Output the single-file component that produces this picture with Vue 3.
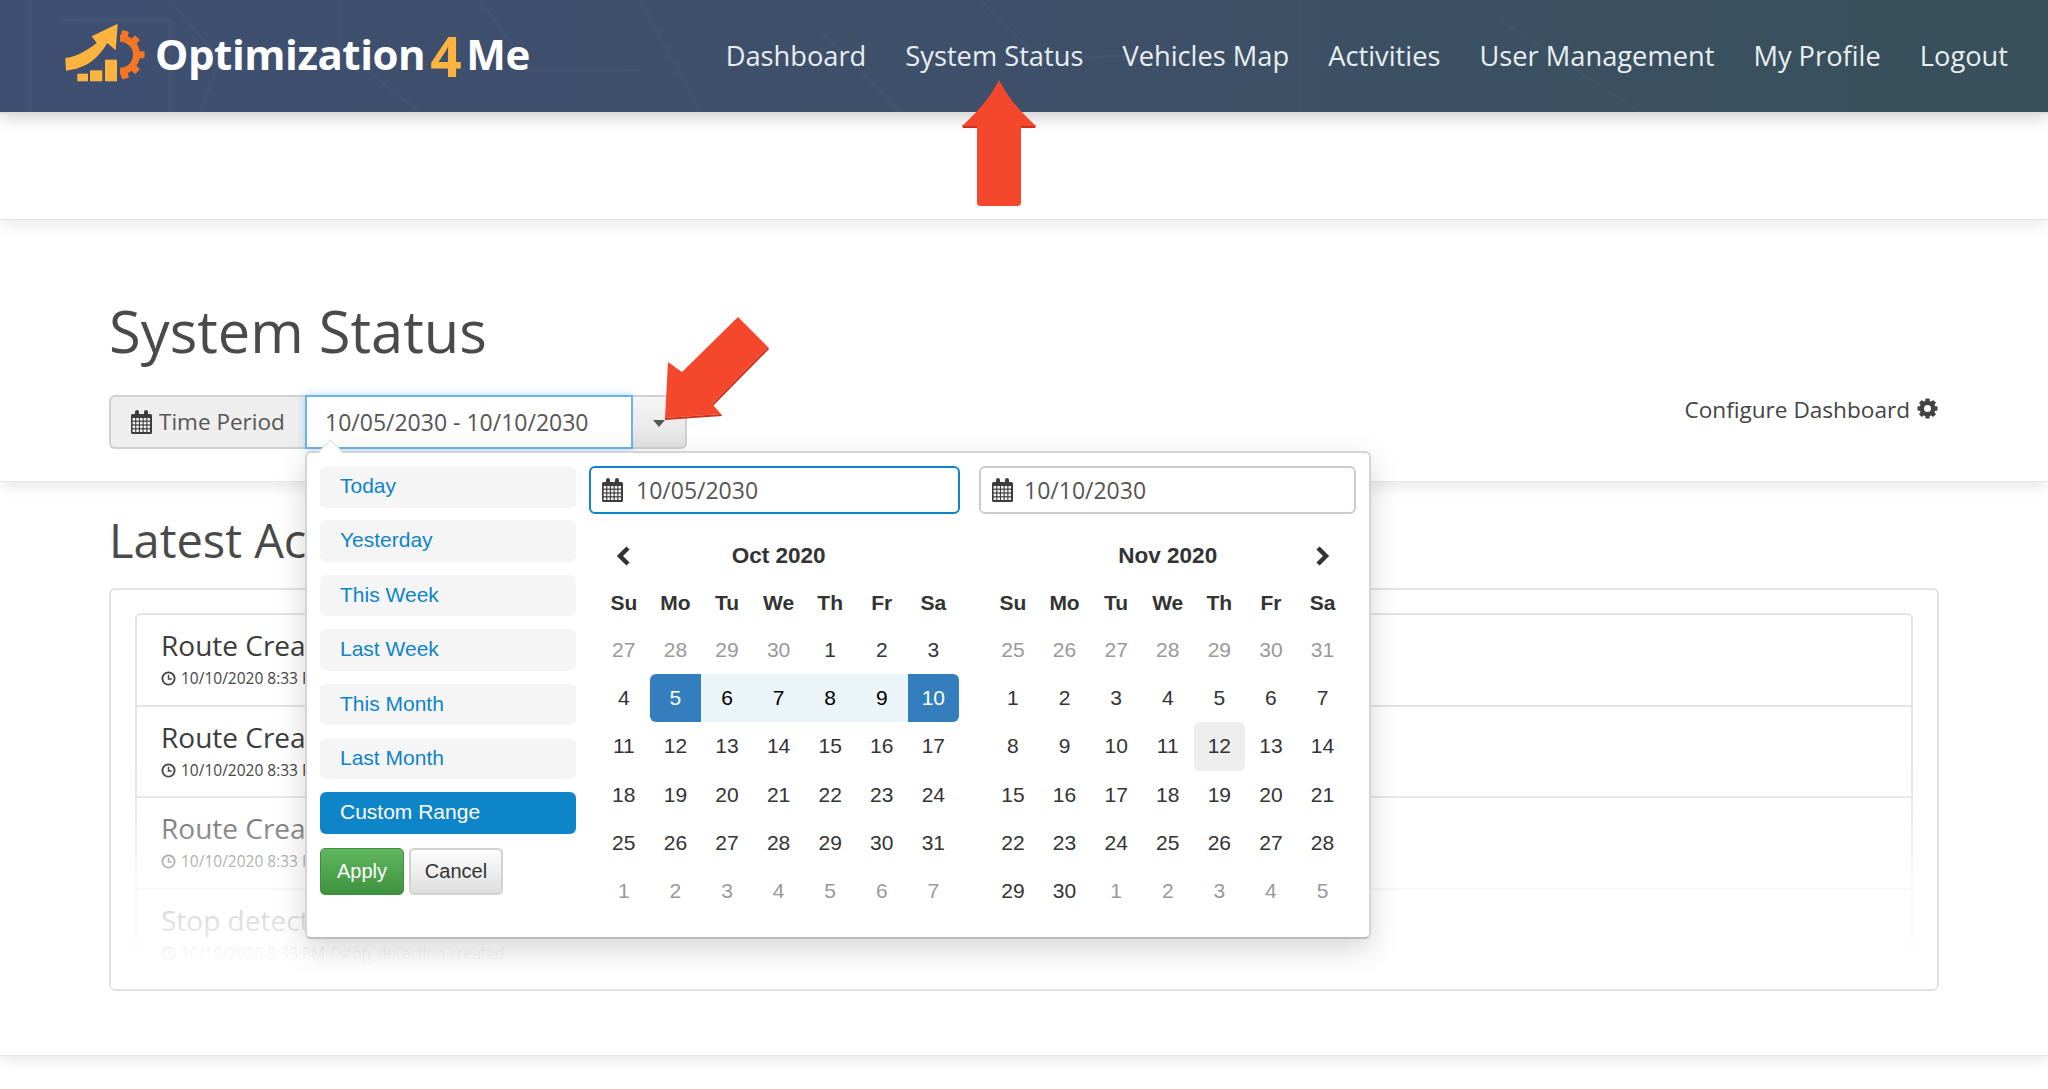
<template>
  <div class="page">
    <svg class="defs" width="0" height="0">
      <symbol id="cal-icon" viewBox="0 0 21 24">
        <path d="M0 5.5a1.5 1.5 0 0 1 1.5-1.5H4V2a2 2 0 0 1 4 0v2h5V2a2 2 0 0 1 4 0v2h2.500A1.500 1.500 0 0 1 21 5.500V22.500A1.500 1.500 0 0 1 19.500 24H1.500A1.500 1.500 0 0 1 0 22.500Z" fill="#3d3d3d" />
        <g fill="#f4f4f4">
          <template v-for="r in 4" :key="r">
            <rect v-for="c in 5" :key="c" :x="1.6 + (c - 1) * 3.7" :y="8 + (r - 1) * 3.8" width="2.6" height="2.6" />
          </template>
        </g>
      </symbol>
    </svg>

    <header class="topbar">
      <svg class="map-lines" viewBox="0 0 2048 112" preserveAspectRatio="none">
        <path d="M30 0V112M60 20H170V112M170 0L220 60L200 112M340 0V50L420 112M480 0L530 70H640M640 0L700 112M820 30L900 112M980 0L1040 60L1220 50M1300 0V112M1500 20L1640 112" />
      </svg>
      <a class="brand">
        <svg class="brand-mark" viewBox="0 0 90 70">
          <path d="M5.300 40C15 39 25 34 36.700 25L31.700 18.300L57.700 5.700L55.700 32.300L47.300 25C38 40 28 50 6 52.700Z" fill="#fdb53f" />
          <rect x="17.300" y="55.700" width="10.700" height="7.600" fill="#fdb53f" />
          <rect x="30" y="52.300" width="12.300" height="11" fill="#fdb53f" />
          <rect x="45" y="41.700" width="12" height="21.600" fill="#fdb53f" />
          <g fill="#f47725">
            <path d="M60 16.700A20 20 0 0 1 60 56.700V49.700A13 13 0 0 0 60 23.700Z" />
            <rect v-for="a in gearTeeth" :key="a" x="77" y="33.200" width="7.500" height="7" rx="1" :transform="`rotate(${a} 60 36.700)`" />
          </g>
        </svg>
        <span class="brand-name">Optimization</span><span class="brand-four">4</span><span class="brand-name">Me</span>
      </a>
      <nav class="nav">
        <a v-for="item in navItems" :key="item">{{ item }}</a>
      </nav>
    </header>

    <section class="band band-empty"></section>

    <section class="band band-status">
      <h1>System Status</h1>
      <div class="toolbar">
        <div class="period">
          <span class="period-label">
            <svg class="cal-svg"><use href="#cal-icon" /></svg>
            Time Period
          </span>
          <span class="period-input">10/05/2030 - 10/10/2030</span>
          <span class="period-btn"><i class="caret"></i></span>

          <div class="picker">
            <i class="picker-tip"></i>
            <div class="ranges">
              <a v-for="r in ranges" :key="r" :class="{ active: r === 'Custom Range' }">{{ r }}</a>
              <div class="range-actions">
                <button class="btn-apply">Apply</button>
                <button class="btn-cancel">Cancel</button>
              </div>
            </div>
            <div class="picker-main">
              <div class="date-inputs">
                <div class="date-input focus">
                  <svg class="cal-svg"><use href="#cal-icon" /></svg>
                  <span>10/05/2030</span>
                </div>
                <div class="date-input">
                  <svg class="cal-svg"><use href="#cal-icon" /></svg>
                  <span>10/10/2030</span>
                </div>
              </div>
              <div class="calendars">
                <div v-for="cal in calendars" :key="cal.title" class="cal">
                  <div class="cal-nav">
                    <svg v-if="cal.prev" viewBox="0 0 15 20" class="chev"><path d="M12 2L4 10L12 18" /></svg>
                  </div>
                  <div class="cal-title">{{ cal.title }}</div>
                  <div class="cal-nav">
                    <svg v-if="cal.next" viewBox="0 0 15 20" class="chev"><path d="M3 2L11 10L3 18" /></svg>
                  </div>
                  <div v-for="d in weekDays" :key="d" class="dow">{{ d }}</div>
                  <div v-for="(c, i) in cal.days" :key="i" class="day" :class="c.cls">{{ c.n }}</div>
                </div>
              </div>
            </div>
          </div>
        </div>
        <a class="configure">
          Configure Dashboard
          <svg class="gear" viewBox="0 0 24 24">
            <circle cx="12" cy="12" r="6.500" fill="none" stroke="#444" stroke-width="5" />
            <rect v-for="a in [0, 45, 90, 135, 180, 225, 270, 315]" :key="a" x="9.500" y="0.500" width="5" height="5" rx="1" fill="#444" :transform="`rotate(${a} 12 12)`" />
          </svg>
        </a>
      </div>
      <svg class="arrow-down" viewBox="0 0 110 105">
        <path d="M76 2L106 32L50 89L59 99L3 103L6 47L20 57Z" fill="#f4472c" />
        <path d="M3 103L59 99L60 101L3 105Z M106 32L50 89L51 91L107 34Z" fill="#c9331e" />
      </svg>
    </section>

    <section class="band band-latest">
      <h2>Latest Activities</h2>
      <div class="card">
        <ul class="activity-list">
          <li v-for="(a, i) in activities" :key="i">
            <div class="activity-title">{{ a.title }}</div>
            <div class="activity-meta">
              <svg class="clock" viewBox="0 0 16 16">
                <circle cx="8" cy="8" r="6.500" fill="none" stroke="#444" stroke-width="2" />
                <path d="M8 4V8.500H11.500" fill="none" stroke="#444" stroke-width="1.600" />
              </svg>
              10/10/2020 8:33 PM / {{ a.key }}
            </div>
          </li>
        </ul>
        <div class="list-fade"></div>
      </div>
    </section>

    <div class="band band-end"></div>

    <svg class="arrow-up" viewBox="0 0 76 128">
      <path d="M38 0C48 20 62 34 75 46L74 47H60V122Q60 126 56 126H20Q16 126 16 122V47H2L1 46C14 34 28 20 38 0Z" fill="#f4472c" />
      <path d="M1 44L2 48H16V46H2Z M75 44L74 48H60V46H74Z M16 122Q16 126 20 126H56Q60 126 60 122V123Q60 126 56 126H20Q16 126 16 123Z" fill="#c9331e" />
    </svg>
  </div>
</template>

<script setup>
const navItems = ['Dashboard', 'System Status', 'Vehicles Map', 'Activities', 'User Management', 'My Profile', 'Logout']
const ranges = ['Today', 'Yesterday', 'This Week', 'Last Week', 'This Month', 'Last Month', 'Custom Range']
const weekDays = ['Su', 'Mo', 'Tu', 'We', 'Th', 'Fr', 'Sa']
const gearTeeth = [-77, -44, 0, 44, 77]

const activities = [
  { title: 'Route Created', key: 'route.created' },
  { title: 'Route Created', key: 'route.created' },
  { title: 'Route Created', key: 'route.created' },
  { title: 'Stop detection created', key: 'stop_detection.created' }
]

// 42 cells, first one is the sunday before the 1st
function buildDays(prevStart, prevLen, monthLen, classFor) {
  const days = []
  for (let n = prevStart; n <= prevLen; n++) days.push({ n, cls: 'off' })
  for (let n = 1; n <= monthLen; n++) days.push({ n, cls: classFor(n) })
  let n = 1
  while (days.length < 42) days.push({ n: n++, cls: 'off' })
  return days
}

const octClass = (n) => {
  if (n === 5) return 'start'
  if (n === 10) return 'end'
  if (n > 5 && n < 10) return 'between'
  return ''
}

const calendars = [
  { title: 'Oct 2020', prev: true, days: buildDays(27, 30, 31, octClass) },
  { title: 'Nov 2020', next: true, days: buildDays(25, 31, 30, (n) => (n === 12 ? 'today' : '')) }
]
</script>

<style>
html, body {
  margin: 0;
  background: #fff;
}
</style>

<style scoped>
.page {
  position: relative;
  width: 2048px;
  height: 1089px;
  overflow: hidden;
  font-family: "Open Sans", sans-serif;
  color: #444;
  background: #fff;
}
.defs {
  position: absolute;
}
.topbar {
  position: relative;
  z-index: 5;
  display: flex;
  align-items: center;
  height: 112px;
  padding: 0 40px 0 60px;
  box-sizing: border-box;
  background: linear-gradient(90deg, #3f4f72, #3e5068 55%, #37505a);
  box-shadow: 0 2px 0 #ddd, 0 4px 18px rgba(0, 0, 0, 0.22);
}
.map-lines {
  position: absolute;
  inset: 0;
  width: 100%;
  height: 100%;
  fill: none;
  stroke: rgba(255, 255, 255, 0.025);
  stroke-width: 3;
}
.brand {
  position: relative;
  display: flex;
  align-items: center;
  height: 70px;
  margin-top: -6px;
  font-weight: 700;
  font-size: 42px;
  letter-spacing: -0.45px;
  color: #fff;
}
.brand-mark {
  width: 90px;
  height: 70px;
  margin-right: 5px;
}
.brand-four {
  margin: 5px 5px 0 5px;
  color: #fdb53f;
  font-size: 55px;
  line-height: 60px;
}
.nav {
  position: relative;
  display: flex;
  gap: 39px;
  margin: -2px 0 0 auto;
  font-size: 27.250px;
  color: #e9edf0;
}
.band {
  position: relative;
  background: #fff;
  box-sizing: border-box;
  box-shadow: 0 -1px 0 #e6e6e6 inset, 0 5px 14px rgba(0, 0, 0, 0.09);
}
.band-empty {
  z-index: 4;
  height: 108px;
}
.band-status {
  z-index: 3;
  height: 262px;
  padding: 76px 109px 0;
}
.band-latest {
  z-index: 2;
  height: 574px;
  padding: 28px 109px 0;
}
.band-end {
  z-index: 1;
  height: 33px;
  box-shadow: none;
}
h1 {
  margin: 0 0 29px;
  font-size: 57.800px;
  font-weight: 400;
  line-height: 70px;
  color: #4a4a4a;
}
h2 {
  margin: 0 0 18px;
  font-size: 47px;
  font-weight: 400;
  line-height: 60px;
  color: #4a4a4a;
}
.toolbar {
  display: flex;
  justify-content: space-between;
  align-items: center;
}
.period {
  position: relative;
  display: flex;
  height: 54px;
  width: 578px;
  font-size: 23px;
  line-height: 50px;
}
.period-label {
  display: flex;
  align-items: center;
  gap: 7px;
  width: 196px;
  padding-left: 20px;
  box-sizing: border-box;
  background: #eee;
  border: 2px solid #d0d0d0;
  border-right: 0;
  border-radius: 6px 0 0 6px;
  color: #555;
  font-size: 22.500px;
}
.cal-svg {
  width: 21px;
  height: 24px;
  flex: none;
}
.period-input {
  width: 328px;
  padding-left: 18px;
  box-sizing: border-box;
  background: #fff;
  border: 2px solid #6db3e6;
  color: #555;
  box-shadow: 0 0 8px rgba(102, 175, 233, 0.5);
}
.period-btn {
  display: flex;
  flex: 1;
  align-items: center;
  justify-content: center;
  background: linear-gradient(#f6f6f6, #e2e2e2);
  border: 2px solid #d0d0d0;
  border-left: 0;
  border-radius: 0 6px 6px 0;
}
.caret {
  width: 0;
  height: 0;
  margin-top: 2px;
  border-top: 7px solid #555;
  border-left: 6px solid transparent;
  border-right: 6px solid transparent;
}
.configure {
  display: flex;
  align-items: center;
  gap: 7px;
  margin: -25px 1px 0 0;
  font-size: 22.600px;
  color: #444;
}
.gear {
  width: 21px;
  height: 21px;
  margin-top: -3px;
}

/* date picker popup */
.picker {
  position: absolute;
  z-index: 10;
  top: 56px;
  left: 196px;
  display: flex;
  gap: 13px;
  width: 1066px;
  height: 488px;
  padding: 13px;
  box-sizing: border-box;
  background: #fff;
  border: 2px solid #d4d4d4;
  border-bottom-color: #bbb;
  border-radius: 6px;
  box-shadow: 0 10px 30px rgba(0, 0, 0, 0.17);
  font-family: "Liberation Sans", Arial, sans-serif;
  font-size: 21px;
  color: #333;
}
.picker-tip {
  position: absolute;
  top: -10px;
  left: 15px;
  width: 16px;
  height: 16px;
  background: #fff;
  transform: rotate(45deg);
  border-top: 1px solid #ddd;
  border-left: 1px solid #ddd;
}
.ranges {
  display: flex;
  flex-direction: column;
  gap: 12.900px;
  width: 256px;
  flex: none;
}
.ranges a {
  height: 41.500px;
  padding-left: 20px;
  background: #f5f5f5;
  border-radius: 6px;
  color: #0d84c8;
  font-size: 21px;
  line-height: 40px;
}
.ranges a.active {
  background: #0f85c9;
  color: #fff;
}
.range-actions {
  display: flex;
  gap: 5px;
  margin-top: 1px;
}
.range-actions button {
  height: 47px;
  padding: 0;
  border-radius: 5px;
  font: 20px "Liberation Sans", Arial, sans-serif;
}
.btn-apply {
  width: 84px;
  background: linear-gradient(#5fb75f, #3f923f);
  border: 1px solid #3e8f3e;
  color: #fff;
}
.btn-cancel {
  width: 94px;
  background: linear-gradient(#fdfdfd, #dedede);
  border: 2px solid #d2d2d2;
  color: #333;
}
.picker-main {
  flex: 1;
}
.date-inputs {
  display: flex;
  gap: 19px;
}
.date-input {
  display: flex;
  align-items: center;
  gap: 11px;
  width: 377px;
  height: 48px;
  padding-left: 11px;
  box-sizing: border-box;
  background: #fff;
  border: 2px solid #ccc;
  border-radius: 6px;
  font-family: "Open Sans", sans-serif;
  font-size: 23px;
  color: #555;
}
.date-input.focus {
  width: 371px;
  gap: 13px;
  border-color: #0f85c9;
}
.calendars {
  display: flex;
  gap: 28px;
  margin: 17px 0 0 9px;
}
.cal {
  display: grid;
  grid-template-columns: repeat(7, 51.600px);
  grid-template-rows: 49px 46px repeat(6, 48.200px);
  align-items: center;
  text-align: center;
}
.cal-nav {
  display: flex;
  justify-content: center;
}
.chev {
  width: 15px;
  height: 20px;
  fill: none;
  stroke: #333;
  stroke-width: 4.500;
}
.cal-title {
  grid-column: span 5;
  font-size: 22.500px;
  font-weight: 700;
  color: #333;
}
.dow {
  font-weight: 700;
  color: #333;
}
.day {
  height: 100%;
  line-height: 48px;
  color: #333;
}
.day.off {
  color: #999;
}
.day.start {
  background: #357ebd;
  color: #fff;
  border-radius: 6px 0 0 6px;
}
.day.end {
  background: #357ebd;
  color: #fff;
  border-radius: 0 6px 6px 0;
}
.day.between {
  background: #ebf4f8;
  color: #000;
}
.day.today {
  background: #eee;
  border-radius: 6px;
}

/* activities card */
.card {
  position: relative;
  height: 403px;
  padding: 23px 24px;
  box-sizing: border-box;
  border: 2px solid #e4e4e4;
  border-radius: 6px;
}
.activity-list {
  height: 352px;
  margin: 0;
  padding: 0;
  overflow: hidden;
  list-style: none;
  border: 2px solid #e4e4e4;
  border-radius: 6px 6px 0 0;
}
.activity-list li {
  height: 91.500px;
  padding-left: 24px;
  box-sizing: border-box;
  border-bottom: 2px solid #e4e4e4;
}
.activity-title {
  padding-top: 12px;
  font-size: 28px;
  line-height: 36px;
  color: #3d3d3d;
}
.activity-meta {
  display: flex;
  align-items: center;
  gap: 5px;
  margin-top: 5px;
  font-size: 15.500px;
  line-height: 21px;
  color: #444;
}
.clock {
  width: 15px;
  height: 15px;
}
.list-fade {
  position: absolute;
  left: 0;
  right: 0;
  top: 180px;
  height: 200px;
  background: linear-gradient(rgba(255, 255, 255, 0), rgba(255, 255, 255, 0.7) 55%, #fff);
}
.arrow-down {
  position: absolute;
  z-index: 11;
  top: 95px;
  left: 662px;
  width: 110px;
  height: 105px;
}
.arrow-up {
  position: absolute;
  z-index: 12;
  top: 80px;
  left: 961px;
  width: 76px;
  height: 128px;
}
</style>
